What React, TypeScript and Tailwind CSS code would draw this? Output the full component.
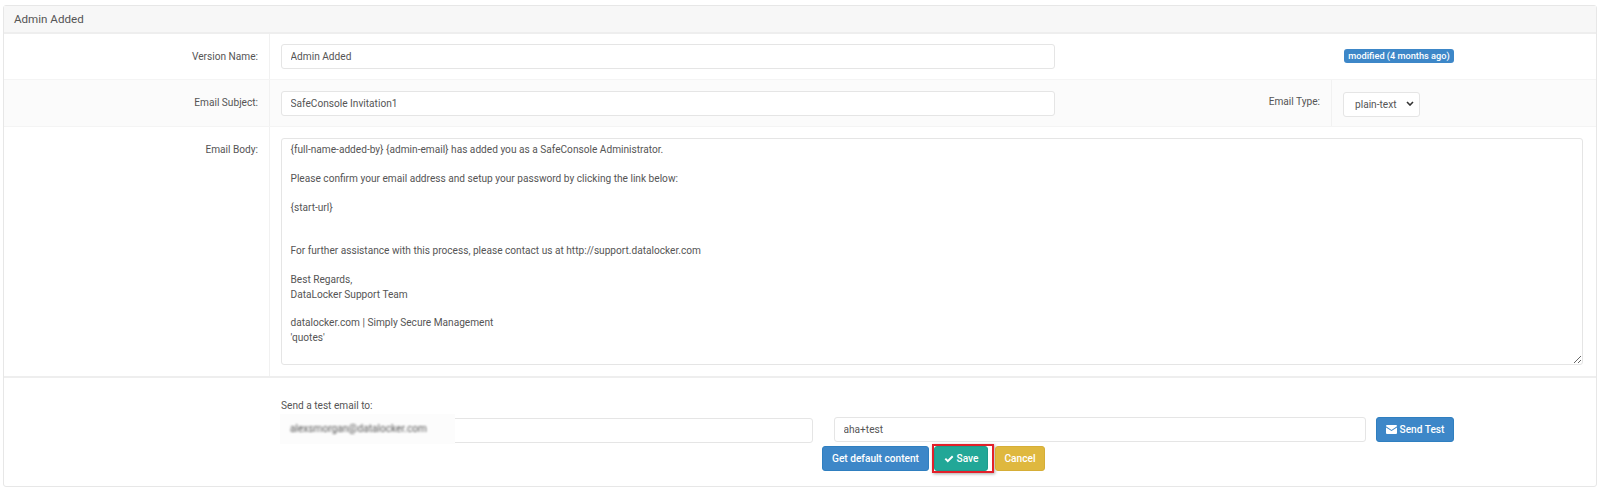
const BODY = `{full-name-added-by} {admin-email} has added you as a SafeConsole Administrator.

Please confirm your email address and setup your password by clicking the link below:

{start-url}


For further assistance with this process, please contact us at http://support.datalocker.com

Best Regards,
DataLocker Support Team

datalocker.com | Simply Secure Management
'quotes'`;

const inputClass =
  'h-[25px] rounded-[3px] border border-[#e5e5e5] bg-white px-[8.500px] text-[10.15px] text-[#555] outline-none';
const labelClass = 'w-[265px] shrink-0 pr-[11px] pt-[15px] text-right text-[10.15px] leading-[16px] text-[#555]';
const buttonClass =
  'flex h-[25px] items-center justify-center rounded-[3px] border text-[10.15px] font-medium text-white';

export default function App() {
  return (
    <div className="h-[490px] bg-white pl-[3px] pr-[3px] pt-[5px] font-['Roboto',sans-serif]">
      <div className="h-[482px] rounded-[3px] border border-[#e7e7e7]">
        <div className="flex h-[28px] items-center border-b-2 border-[#eeeeee] bg-[#f7f7f7] px-[10px] pt-[2px] text-[11.6px] text-[#555]">
          Admin Added
        </div>

        <div className="flex h-[46px] border-b border-[#f4f4f4]">
          <div className={labelClass}>Version Name:</div>
          <div className="flex flex-1 border-l border-[#f1f1f1] pl-[11px] pt-[10px]">
            <input readOnly value="Admin Added" className={`${inputClass} w-[774px]`} />
            <div className="ml-[289px] mt-[5px] flex h-[14px] w-[110px] items-center justify-center whitespace-nowrap rounded-[3px] bg-[#3d87c8] text-[9.2px] font-medium text-white">
              modified (4 months ago)
            </div>
          </div>
        </div>

        <div className="flex h-[47px] border-b border-[#f4f4f4] bg-[#fbfbfb]">
          <div className={labelClass}>Email Subject:</div>
          <div className="flex flex-1 border-l border-[#f1f1f1] pl-[11px] pt-[11px]">
            <input readOnly value="SafeConsole Invitation1" className={`${inputClass} w-[774px]`} />
            <div className="w-[276px] pt-[3px] pr-[11px] text-right text-[10.15px] leading-[16px] text-[#555]">Email Type:</div>
            <div className="-mt-[11px] h-[46px] border-l border-[#f1f1f1] pl-[11px] pt-[11px]">
              <div className="relative w-[77px]">
                <select className={`${inputClass} w-[77px] appearance-none px-[11px]`} defaultValue="plain-text">
                  <option>plain-text</option>
                </select>
                <svg className="absolute right-[6px] top-[10px]" width="8" height="5" viewBox="0 0 8 5" aria-hidden>
                  <path d="M1 1 4 4 7 1" fill="none" stroke="#333" strokeWidth="1.600" />
                </svg>
              </div>
            </div>
          </div>
        </div>

        <div className="flex h-[251px] border-b-2 border-[#eeeeee]">
          <div className={labelClass}>Email Body:</div>
          <div className="flex-1 border-l border-[#f1f1f1] pl-[11px] pt-[11px]">
            <textarea
              readOnly
              value={BODY}
              className="block h-[227px] w-[1302px] rounded-[3px] border border-[#e5e5e5] bg-white px-[8.500px] py-[4px] text-[10.15px] leading-[14.45px] text-[#555] outline-none"
            />
          </div>
        </div>

        <div className="pl-[277px] pt-[21px]">
          <div className="text-[10.15px] leading-[14px] text-[#555]">Send a test email to:</div>
          <div className="mt-[4px] flex">
            <div className="relative">
              <input readOnly className={`${inputClass} w-[532px]`} />
              <div className="absolute -left-[1px] -top-[3px] flex h-[30px] w-[175px] items-center bg-[#fcfcfc] pl-[10px]">
                <span className="text-[10.15px] text-[#555] blur-[1px]">alexsmorgan@datalocker.com</span>
              </div>
            </div>
            <input readOnly value="aha+test" className={`${inputClass} ml-[21px] w-[532px]`} />
            <button className={`${buttonClass} ml-[10px] w-[78px] gap-[3px] border-[#2f7fc0] bg-[#3d87c8]`}>
              <svg width="11" height="9" viewBox="0 0 11 9" aria-hidden>
                <path d="M0 1a1 1 0 0 1 1-1h9a1 1 0 0 1 1 1v.3L5.5 5 0 1.3Z" fill="white" />
                <path d="M0 2.5 5.5 6 11 2.500V8a1 1 0 0 1-1 1H1a1 1 0 0 1-1-1Z" fill="white" />
              </svg>
              Send Test
            </button>
          </div>
          <div className="ml-[541px] mt-[3px] flex">
            <button className={`${buttonClass} w-[107px] border-[#2f7fc0] bg-[#3d87c8]`}>Get default content</button>
            <div className="-my-[2px] ml-[3px] h-[29px] border-2 border-[#e3202a] pr-[4px] shadow-[1px_1px_3px_rgba(0,0,0,0.35)]">
              <button className={`${buttonClass} h-[25px] w-[54px] gap-[3px] border-[#1f9c8c] bg-[#22a797]`}>
                <svg width="10" height="8" viewBox="0 0 10 8" aria-hidden>
                  <path d="M0.6 4.3 2 2.900 3.800 4.700 8 0.500 9.400 1.900 3.800 7.500Z" fill="white" />
                </svg>
                Save
              </button>
            </div>
            <button className={`${buttonClass} ml-[1px] w-[50px] border-[#d6ae37] bg-[#dfb83f]`}>Cancel</button>
          </div>
        </div>
      </div>
    </div>
  );
}
